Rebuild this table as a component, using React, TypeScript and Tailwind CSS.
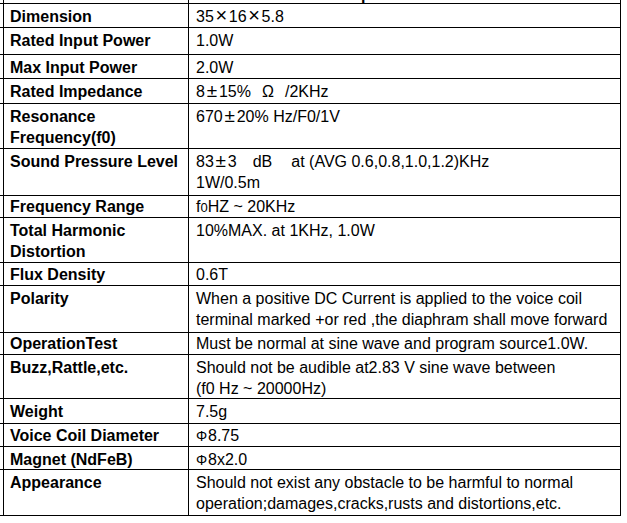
import React from "react"

type Row = {
    label: React.ReactNode
    value: React.ReactNode
    h: string
    pt?: string
}

const Pm = () => <span className="inline-block w-[14px] text-center text-[19px] leading-[0]">±</span>
const Times = () => <span className="inline-block w-[15px] text-center text-[20px] leading-[0]">×</span>
const Phi = () => <span className="inline-block w-[12px] text-left text-[14px]">Φ</span>

const rows: Row[] = [
    { label: "Dimension", h: "h-[24px]", value: <>35<Times />16<Times />5.8</> },
    { label: "Rated Input Power", h: "h-[27px]", value: "1.0W" },
    { label: "Max Input Power", h: "h-[24px]", value: "2.0W" },
    { label: "Rated Impedance", h: "h-[25px]", value: <>8<Pm />15%<span className="inline-block w-[34px] text-center">Ω</span>/2KHz</> },
    { label: <>Resonance<br />Frequency(f0)</>, h: "h-[45px]", value: <>670<Pm />20% Hz/F0/1V</> },
    { label: "Sound Pressure Level", h: "h-[47px]", value: <>83<Pm />3<span className="ml-[16px]">dB</span><span className="ml-[19px]">at (AVG 0.6,0.8,1.0,1.2)KHz</span><br />1W/0.5m</> },
    { label: "Frequency Range", h: "h-[22px]", pt: "pt-0", value: <>f<span className="text-[13px]">0</span>HZ ~ 20KHz</> },
    { label: <>Total Harmonic<br />Distortion</>, h: "h-[45px]", value: "10%MAX. at 1KHz, 1.0W" },
    { label: "Flux Density", h: "h-[23px]", pt: "pt-[1px]", value: "0.6T" },
    { label: "Polarity", h: "h-[47px]", value: <>When a positive DC Current is applied to the voice coil<br />terminal marked +or red ,the diaphram shall move forward</> },
    { label: "OperationTest", h: "h-[22px]", pt: "pt-0", value: "Must be normal at sine wave and program source1.0W." },
    { label: "Buzz,Rattle,etc.", h: "h-[44px]", value: <>Should not be audible at2.83 V sine wave between<br />(f0 Hz ~ 20000Hz)</> },
    { label: "Weight", h: "h-[25px]", value: "7.5g" },
    { label: "Voice Coil Diameter", h: "h-[23px]", pt: "pt-[1px]", value: <><Phi />8.75</> },
    { label: "Magnet (NdFeB)", h: "h-[23px]", value: <><Phi />8x2.0</> },
    { label: "Appearance", h: "h-[46px]", value: <>Should not exist any obstacle to be harmful to normal<br />operation;damages,cracks,rusts and distortions,etc.</> },
]

export default function App(): React.ReactElement {

    const displayRows = rows.map((row, index) => {
        const pt = row.pt ?? "pt-[2px]"
        return (
            <div key={index} className={`flex border-t border-r border-black ${row.h}`}>
                <div className="w-[3px] shrink-0"></div>
                <div className={`w-[186px] shrink-0 border-l border-r border-black pl-[6px] font-bold ${pt}`}>
                    {row.label}
                </div>
                <div className={`flex-1 pl-[7px] whitespace-nowrap ${pt}`}>
                    {row.value}
                </div>
            </div>
        )
    })

    return (
        <div className="min-h-[523px] w-[627px] bg-white text-black font-['Liberation_Sans',Arial,sans-serif] text-[16px] leading-[21px] overflow-hidden">
            <section className="w-[621px] -mt-[21px] border-b border-black">
                {/* header row, mostly above the page edge */}
                <div className="flex border-t border-r border-black h-[24px]">
                    <div className="w-[3px] shrink-0"></div>
                    <div className="w-[186px] shrink-0 border-l border-r border-black pt-[4px] text-center font-bold">Item</div>
                    <div className="flex-1 pt-[4px] text-center font-bold">Specifications</div>
                </div>
                {displayRows}
            </section>
        </div>
    )
}
